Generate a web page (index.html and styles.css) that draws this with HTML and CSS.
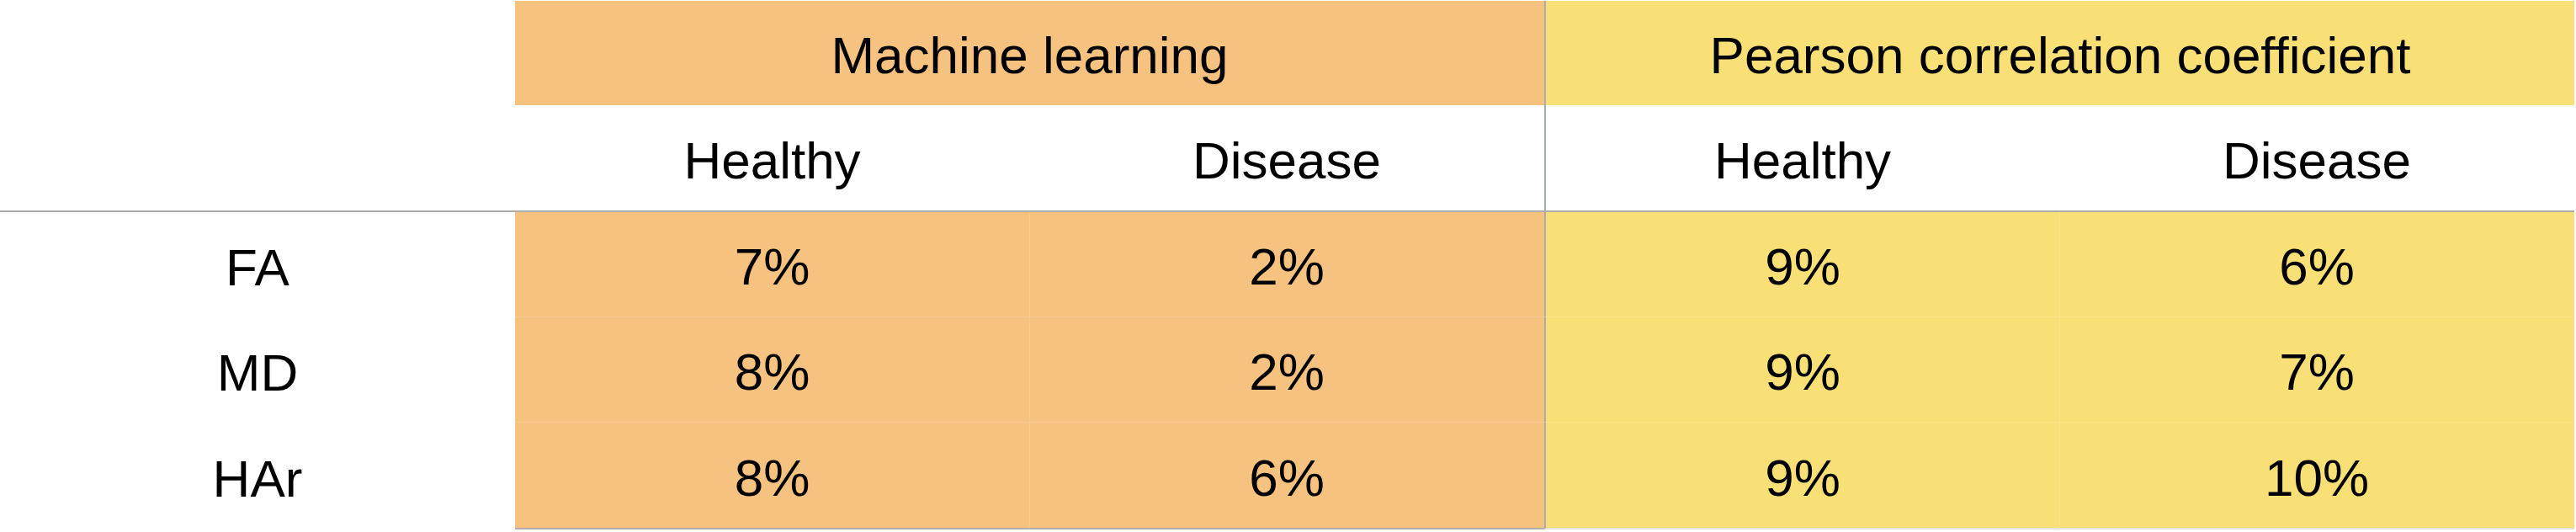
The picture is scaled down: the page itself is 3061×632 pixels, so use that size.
FILE: index.html
```html
<!DOCTYPE html>
<html lang="en">
<head>
<meta charset="utf-8">
<title>Comparison table</title>
<link rel="stylesheet" href="styles.css">
</head>
<body>
<div class="table">
  <div class="cell band blank"></div>
  <div class="cell band ml span2">Machine learning</div>
  <div class="cell band pcc span2 divider">Pearson correlation coefficient</div>

  <div class="cell sub"></div>
  <div class="cell sub">Healthy</div>
  <div class="cell sub">Disease</div>
  <div class="cell sub divider">Healthy</div>
  <div class="cell sub">Disease</div>

  <div class="cell label">FA</div>
  <div class="cell data ml">7%</div>
  <div class="cell data ml sep">2%</div>
  <div class="cell data pcc divider">9%</div>
  <div class="cell data pcc sep">6%</div>

  <div class="cell label">MD</div>
  <div class="cell data ml">8%</div>
  <div class="cell data ml sep">2%</div>
  <div class="cell data pcc divider">9%</div>
  <div class="cell data pcc sep">7%</div>

  <div class="cell label">HAr</div>
  <div class="cell data ml last">8%</div>
  <div class="cell data ml sep last">6%</div>
  <div class="cell data pcc divider last">9%</div>
  <div class="cell data pcc sep last">10%</div>
</div>
</body>
</html>
```
FILE: styles.css
```css
html, body {
  margin: 0;
  padding: 0;
  background: #ffffff;
}

body {
  font-family: "Liberation Sans", Arial, Helvetica, sans-serif;
  color: #000000;
}

.table {
  display: grid;
  grid-template-columns: 612px 611px 612px 612px 612px;
  grid-template-rows: 124px 127px 125px 125px 127px;
  width: 3059px;
  padding-top: 1px;
}

.cell {
  box-sizing: border-box;
  display: flex;
  align-items: center;
  justify-content: center;
  font-size: 62px;
  line-height: 1;
  padding-top: 6px;
}

.span2 {
  grid-column: span 2;
}

.ml {
  background: #f5c27f;
}

.pcc {
  background: #f8e077;
}

.divider {
  border-left: 2px solid #a8acb4;
}

.sub {
  background: #ffffff;
  border-bottom: 2px solid #acacac;
}

.sub.divider {
  border-left: 2px solid #a8acb4;
}

.data {
  border-bottom: 1px solid rgba(255, 255, 255, 0.14);
}

.sep {
  box-shadow: inset 1px 0 0 rgba(255, 255, 255, 0.12);
}

.data.last {
  border-bottom: 2px solid #b0b0b0;
}

.pcc.last {
  border-bottom: 2px solid #e4e2dc;
}
```
